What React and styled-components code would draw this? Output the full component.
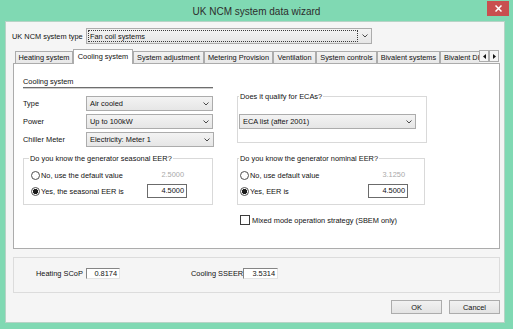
import React from 'react';
import styled, { createGlobalStyle } from 'styled-components';

const GlobalStyle = createGlobalStyle`
  * { box-sizing: border-box; }
  html, body { margin: 0; padding: 0; background: #80d9b3; }
  body {
    font-family: "Liberation Sans", Arial, sans-serif;
    font-size: 7.4px;
    color: #111;
  }
`;

const Window = styled.div`
  width: 513px;
  height: 329px;
  background: #80d9b3;
  display: flex;
  flex-direction: column;
`;

const TitleBar = styled.div`
  height: 21px;
  display: grid;
  grid-template-columns: 1fr auto 1fr;
  align-items: center;
`;

const Title = styled.div`
  grid-column: 2;
  font-size: 10px;
  color: #2d2d2d;
  padding-top: 1px;
`;

const CloseButton = styled.div`
  grid-column: 3;
  justify-self: end;
  align-self: start;
  margin: 1px 4px 0 0;
  width: 22px;
  height: 15px;
  background: #c94f4f;
  display: flex;
  align-items: center;
  justify-content: center;
`;

const Client = styled.div`
  flex: 1;
  margin: 0 8px 6px 5px;
  background: #f5f5f5;
  border: 1px solid #b7d3c6;
  padding: 6px 4px 0 7px;
  display: flex;
  flex-direction: column;
`;

const TypeRow = styled.div`
  display: flex;
  align-items: center;
  height: 16px;
  margin-left: -1px;
`;

const Label = styled.div`
  width: ${(p) => p.$w}px;
  flex: none;
  white-space: nowrap;
`;

const Combo = styled.div`
  width: ${(p) => p.$w}px;
  height: ${(p) => p.$h || 15}px;
  flex: none;
  border: 1px solid #acacac;
  background: linear-gradient(#f3f3f3, #e6e6e6);
  display: flex;
  align-items: stretch;
`;

const ComboText = styled.div`
  flex: 1;
  margin: 1px;
  padding-left: 1px;
  display: flex;
  align-items: center;
  white-space: nowrap;
  border: 1px dotted ${(p) => (p.$focus ? '#3a3a3a' : 'transparent')};
`;

const ComboArrow = styled.div`
  width: 12px;
  display: flex;
  align-items: center;
  justify-content: center;
`;

const TabRow = styled.div`
  display: flex;
  height: 15px;
  margin-top: 5px;
  padding: 0 1px 0 2px;
  position: relative;
  z-index: 1;
`;

const TabList = styled.div`
  flex: 1;
  min-width: 0;
  display: flex;
  align-items: flex-start;
  overflow: hidden;
`;

const Tab = styled.div`
  width: ${(p) => p.$w}px;
  flex: none;
  height: ${(p) => (p.$active ? 15 : 12)}px;
  margin-top: ${(p) => (p.$active ? 0 : 2)}px;
  border: 1px solid #acacac;
  border-bottom: none;
  background: ${(p) => (p.$active ? '#fff' : 'linear-gradient(#f2f2f2, #e8e8e8)')};
  display: flex;
  align-items: center;
  justify-content: ${(p) => (p.$clip ? 'flex-start' : 'center')};
  padding: ${(p) => (p.$active ? '0 0 2px' : '0')} ${(p) => (p.$clip ? '3px' : '0')};
  white-space: nowrap;
`;

const ScrollButtons = styled.div`
  display: flex;
  margin-top: 1px;
  height: 12px;
`;

const ScrollButton = styled.div`
  width: 10px;
  height: 12px;
  border: 1px solid #acacac;
  background: #f4f4f4;
  display: flex;
  align-items: center;
  justify-content: center;
`;

const Panel = styled.div`
  height: 186px;
  margin-top: -1px;
  background: #fff;
  border: 1px solid #acacac;
  padding: 13px 0 0 9px;
  display: grid;
  grid-template-columns: 190px 190px;
  grid-template-areas:
    "head ."
    "fields eca"
    "seasonal nominal"
    ". mixed";
  column-gap: 24px;
  align-content: start;
  align-items: start;
`;

const SectionHead = styled.div`
  grid-area: head;
  height: 11px;
  line-height: 10px;
  border-bottom: 1px solid #6e6e6e;
  box-shadow: 0 1px 0 #cfcfcf;
`;

const Fields = styled.div`
  grid-area: fields;
  margin-top: 8px;
  display: flex;
  flex-direction: column;
  gap: 3px;
`;

const FieldRow = styled.div`
  display: flex;
  align-items: center;
`;

const GroupBox = styled.div`
  grid-area: ${(p) => p.$area};
  position: relative;
  width: ${(p) => p.$w}px;
  height: 47px;
  margin-top: ${(p) => p.$top}px;
  border: 1px solid #d9d9d9;
  padding: ${(p) => p.$pad};
  display: flex;
  flex-direction: column;
  gap: 2px;
`;

const Legend = styled.div`
  position: absolute;
  top: -5px;
  left: ${(p) => p.$x}px;
  line-height: 9px;
  padding: 0 1px;
  background: #fff;
  white-space: nowrap;
`;

const RadioRow = styled.div`
  height: 14px;
  display: flex;
  align-items: center;
  justify-content: space-between;
`;

const RadioLabel = styled.div`
  display: flex;
  align-items: center;
  gap: 1px;
  white-space: nowrap;
`;

const RadioDot = styled.span`
  width: 9px;
  height: 9px;
  flex: none;
  border-radius: 50%;
  border: 1px solid #505050;
  background: ${(p) =>
    p.$on ? 'radial-gradient(circle, #1a1a1a 0 2.3px, #fff 2.9px)' : '#fff'};
`;

const ValueBox = styled.div`
  width: 40px;
  height: 14px;
  flex: none;
  line-height: 12px;
  text-align: right;
  padding-right: 2px;
  border: 1px solid ${(p) => (p.$input ? '#6b6b6b' : 'transparent')};
  background: ${(p) => (p.$input ? '#fff' : 'transparent')};
  color: ${(p) => (p.$input ? '#111' : '#a9a9a9')};
`;

const CheckRow = styled.div`
  grid-area: mixed;
  margin: 10px 0 0 3px;
  display: flex;
  align-items: center;
  gap: 2px;
  white-space: nowrap;
`;

const CheckBox = styled.span`
  width: 10px;
  height: 10px;
  flex: none;
  border: 1px solid #3c3c3c;
  background: #fff;
`;

const Summary = styled.div`
  height: 36px;
  margin-top: 8px;
  border: 1px solid #dcdcdc;
  padding: 10px 0 0 22px;
  display: flex;
  align-items: flex-start;
  gap: 71px;
`;

const Stat = styled.div`
  display: flex;
  align-items: center;
  height: 11px;
`;

const StatValue = styled.div`
  width: ${(p) => p.$w}px;
  height: 11px;
  line-height: 9px;
  text-align: right;
  padding-right: 2px;
  background: #fff;
  border-style: solid;
  border-width: 1px;
  border-color: #858585 #e4e4e4 #e4e4e4 #858585;
`;

const ButtonRow = styled.div`
  margin-top: 7px;
  display: flex;
  justify-content: flex-end;
  gap: 7px;
`;

const Button = styled.div`
  width: 51px;
  height: 14px;
  border: 1px solid #acacac;
  background: linear-gradient(#f1f1f1, #e3e3e3);
  display: flex;
  align-items: center;
  justify-content: center;
`;

const Chevron = () => (
  <svg width="6" height="4" viewBox="0 0 6 4">
    <path d="M0.5 0.5 L3 3 L5.5 0.5" fill="none" stroke="#4a4a4a" strokeWidth="1" />
  </svg>
);

const Select = ({ w, h, focus, children }) => (
  <Combo $w={w} $h={h}>
    <ComboText $focus={focus}>{children}</ComboText>
    <ComboArrow>
      <Chevron />
    </ComboArrow>
  </Combo>
);

const Radio = ({ on, children }) => (
  <RadioLabel>
    <RadioDot $on={on} />
    <span>{children}</span>
  </RadioLabel>
);

const tabs = [
  { name: 'Heating system', w: 58 },
  { name: 'Cooling system', w: 60, active: true },
  { name: 'System adjustment', w: 71 },
  { name: 'Metering Provision', w: 69 },
  { name: 'Ventilation', w: 43 },
  { name: 'System controls', w: 61 },
  { name: 'Bivalent systems', w: 63 },
  { name: 'Bivalent DHW', w: 53, clip: true },
];

export default function App() {
  return (
    <>
      <GlobalStyle />
      <Window>
        <TitleBar>
          <Title>UK NCM system data wizard</Title>
          <CloseButton>
            <svg width="7" height="7" viewBox="0 0 7 7">
              <path d="M0.5 0.5 L6.5 6.5 M6.5 0.5 L0.5 6.5" stroke="#fff" strokeWidth="1.5" />
            </svg>
          </CloseButton>
        </TitleBar>
        <Client>
          <TypeRow>
            <Label $w={74}>UK NCM system type</Label>
            <Select w={286} h={16} focus>
              Fan coil systems
            </Select>
          </TypeRow>

          <TabRow>
            <TabList>
              {tabs.map((t) => (
                <Tab key={t.name} $w={t.w} $active={t.active} $clip={t.clip}>
                  {t.name}
                </Tab>
              ))}
            </TabList>
            <ScrollButtons>
              <ScrollButton>
                <svg width="3" height="5" viewBox="0 0 3 5">
                  <path d="M3 0 L0 2.5 L3 5 Z" fill="#111" />
                </svg>
              </ScrollButton>
              <ScrollButton>
                <svg width="3" height="5" viewBox="0 0 3 5">
                  <path d="M0 0 L3 2.5 L0 5 Z" fill="#111" />
                </svg>
              </ScrollButton>
            </ScrollButtons>
          </TabRow>

          <Panel>
            <SectionHead>Cooling system</SectionHead>

            <Fields>
              <FieldRow>
                <Label $w={63}>Type</Label>
                <Select w={127}>Air cooled</Select>
              </FieldRow>
              <FieldRow>
                <Label $w={63}>Power</Label>
                <Select w={127}>Up to 100kW</Select>
              </FieldRow>
              <FieldRow>
                <Label $w={63}>Chiller Meter</Label>
                <Select w={128}>Electricity: Meter 1</Select>
              </FieldRow>
            </Fields>

            <GroupBox $area="eca" $w={190} $top={8} $pad="17px 0 0 1px">
              <Legend $x={1}>Does it qualify for ECAs?</Legend>
              <Select w={177}>ECA list (after 2001)</Select>
            </GroupBox>

            <GroupBox $area="seasonal" $w={190} $top={11} $pad="9px 25px 0 7px">
              <Legend $x={5}>Do you know the generator seasonal EER?</Legend>
              <RadioRow>
                <Radio>No, use the default value</Radio>
                <ValueBox>2.5000</ValueBox>
              </RadioRow>
              <RadioRow>
                <Radio on>Yes, the seasonal EER is</Radio>
                <ValueBox $input>4.5000</ValueBox>
              </RadioRow>
            </GroupBox>

            <GroupBox $area="nominal" $w={188} $top={11} $pad="9px 16px 0 2px">
              <Legend $x={1}>Do you know the generator nominal EER?</Legend>
              <RadioRow>
                <Radio>No, use default value</Radio>
                <ValueBox>3.1250</ValueBox>
              </RadioRow>
              <RadioRow>
                <Radio on>Yes, EER is</Radio>
                <ValueBox $input>4.5000</ValueBox>
              </RadioRow>
            </GroupBox>

            <CheckRow>
              <CheckBox />
              <span>Mixed mode operation strategy (SBEM only)</span>
            </CheckRow>
          </Panel>

          <Summary>
            <Stat>
              <Label $w={50}>Heating SCoP</Label>
              <StatValue $w={34}>0.8174</StatValue>
            </Stat>
            <Stat>
              <Label $w={52}>Cooling SSEER</Label>
              <StatValue $w={35}>3.5314</StatValue>
            </Stat>
          </Summary>

          <ButtonRow>
            <Button>OK</Button>
            <Button>Cancel</Button>
          </ButtonRow>
        </Client>
      </Window>
    </>
  );
}
